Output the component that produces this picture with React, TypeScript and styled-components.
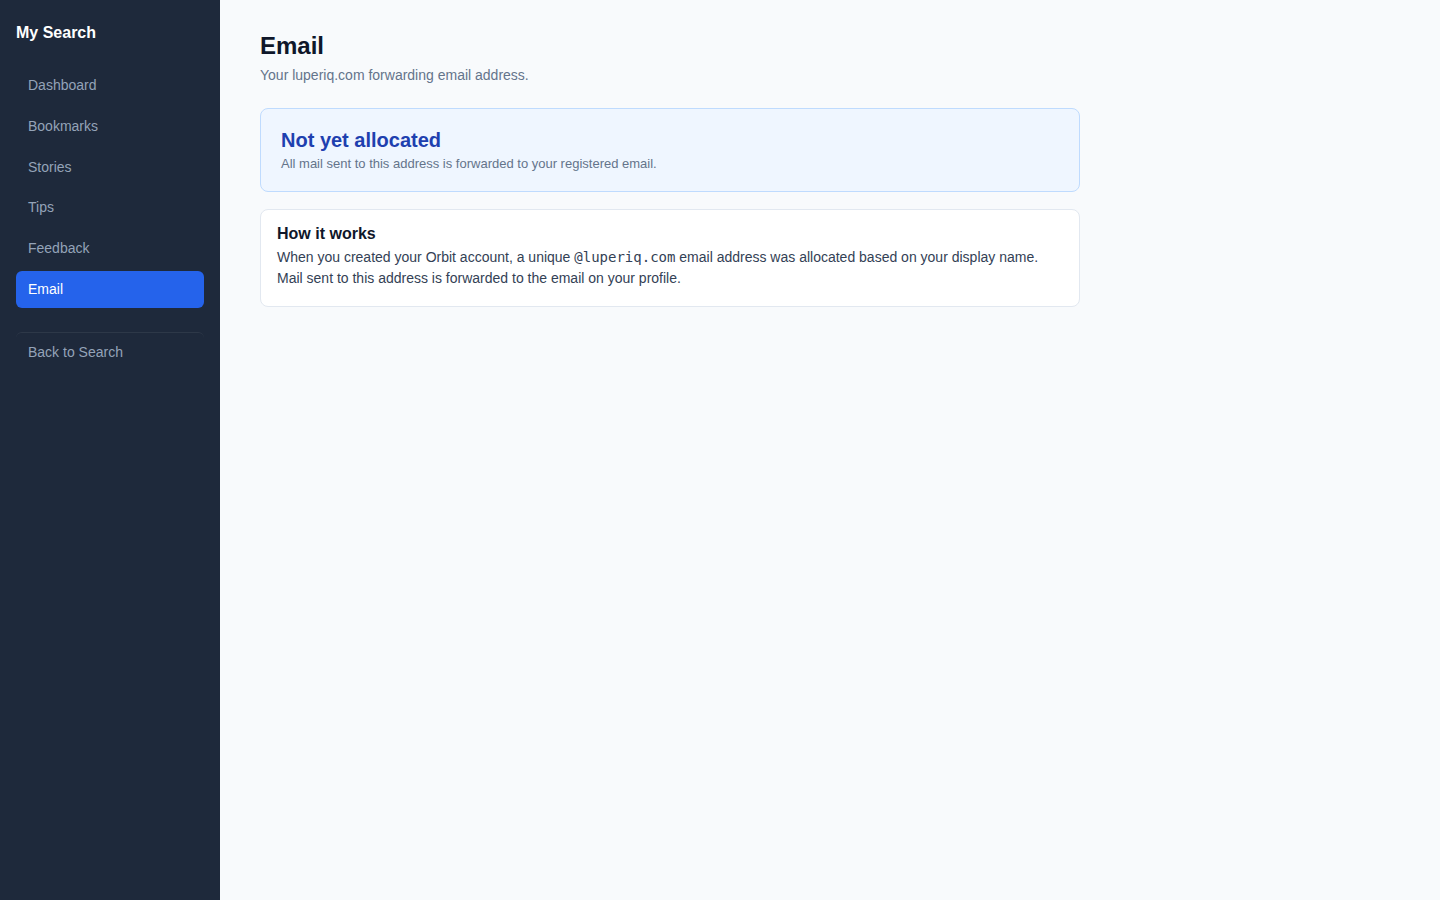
import React from "react";
import styled, { createGlobalStyle } from "styled-components";

const GlobalStyle = createGlobalStyle`
    * { box-sizing: border-box; }
    html, body { margin: 0; padding: 0; height: 100%; }
    body {
        font-family: "Liberation Sans", Arial, sans-serif;
        background: #f8fafc;
        color: #0f172a;
    }
    #root { min-height: 100vh; }
`;

const Layout = styled.div`
    display: flex;
    min-height: 100vh;
`;

const Sidebar = styled.aside`
    width: 220px;
    flex-shrink: 0;
    background: #1e293b;
    padding: 23px 16px;
    display: flex;
    flex-direction: column;
`;

const Brand = styled.div`
    color: #ffffff;
    font-size: 16px;
    font-weight: 700;
    line-height: 20px;
    margin-bottom: 24px;
`;

const Nav = styled.nav`
    display: flex;
    flex-direction: column;
    gap: 4px;
`;

const NavItem = styled.a<{ $active?: boolean }>`
    display: block;
    padding: 10px 12px;
    line-height: 1.2;
    border-radius: 6px;
    font-size: 14px;
    text-decoration: none;
    cursor: pointer;
    color: ${(p) => (p.$active ? "#ffffff" : "#94a3b8")};
    background: ${(p) => (p.$active ? "#2563eb" : "transparent")};
`;

const SidebarFooter = styled.div`
    margin-top: 24px;
    padding-top: 1px;
    border-top: 1px solid rgba(255, 255, 255, 0.07);
    border-radius: 6px 6px 0 0;
`;

const Main = styled.main`
    flex: 1;
    padding: 32px 40px;
`;

const Content = styled.div`
    max-width: 820px;
`;

const PageTitle = styled.h1`
    margin: 0;
    font-size: 24px;
    line-height: 28px;
    font-weight: 700;
    color: #0f172a;
`;

const PageSubtitle = styled.p`
    margin: 5px 0 23px;
    font-size: 14px;
    line-height: 20px;
    color: #64748b;
`;

const StatusBox = styled.section`
    background: #eff6ff;
    border: 1px solid #bfdbfe;
    border-radius: 8px;
    padding: 17px 20px 18px;
    margin-bottom: 17px;
`;

const StatusTitle = styled.div`
    font-size: 20px;
    line-height: 28px;
    font-weight: 700;
    color: #1e40af;
`;

const StatusNote = styled.div`
    margin-top: 1px;
    font-size: 13px;
    line-height: 18px;
    color: #64748b;
`;

const Card = styled.section`
    background: #ffffff;
    border: 1px solid #e2e8f0;
    border-radius: 8px;
    padding: 14px 16px 17px;
`;

const CardTitle = styled.h2`
    margin: 0 0 3px;
    font-size: 16px;
    line-height: 20px;
    font-weight: 700;
    color: #0f172a;
`;

const CardText = styled.p`
    margin: 0;
    font-size: 14px;
    line-height: 21px;
    color: #334155;
`;

const Code = styled.code`
    font-family: "DejaVu Sans Mono", "Liberation Mono", monospace;
    font-size: 14px;
    line-height: 1;
    color: #334155;
`;

const navItems = ["Dashboard", "Bookmarks", "Stories", "Tips", "Feedback", "Email"];

export default function App() {
    return (
        <>
            <GlobalStyle />
            <Layout>
                <Sidebar>
                    <Brand>My Search</Brand>
                    <Nav>
                        {navItems.map((item) => (
                            <NavItem key={item} $active={item === "Email"}>
                                {item}
                            </NavItem>
                        ))}
                    </Nav>
                    <SidebarFooter>
                        <NavItem>Back to Search</NavItem>
                    </SidebarFooter>
                </Sidebar>
                <Main>
                    <Content>
                        <PageTitle>Email</PageTitle>
                        <PageSubtitle>Your luperiq.com forwarding email address.</PageSubtitle>
                        <StatusBox>
                            <StatusTitle>Not yet allocated</StatusTitle>
                            <StatusNote>All mail sent to this address is forwarded to your registered email.</StatusNote>
                        </StatusBox>
                        <Card>
                            <CardTitle>How it works</CardTitle>
                            <CardText>
                                When you created your Orbit account, a unique <Code>@luperiq.com</Code> email address
                                was allocated based on your display name. Mail sent to this address is forwarded to the
                                email on your profile.
                            </CardText>
                        </Card>
                    </Content>
                </Main>
            </Layout>
        </>
    );
}
